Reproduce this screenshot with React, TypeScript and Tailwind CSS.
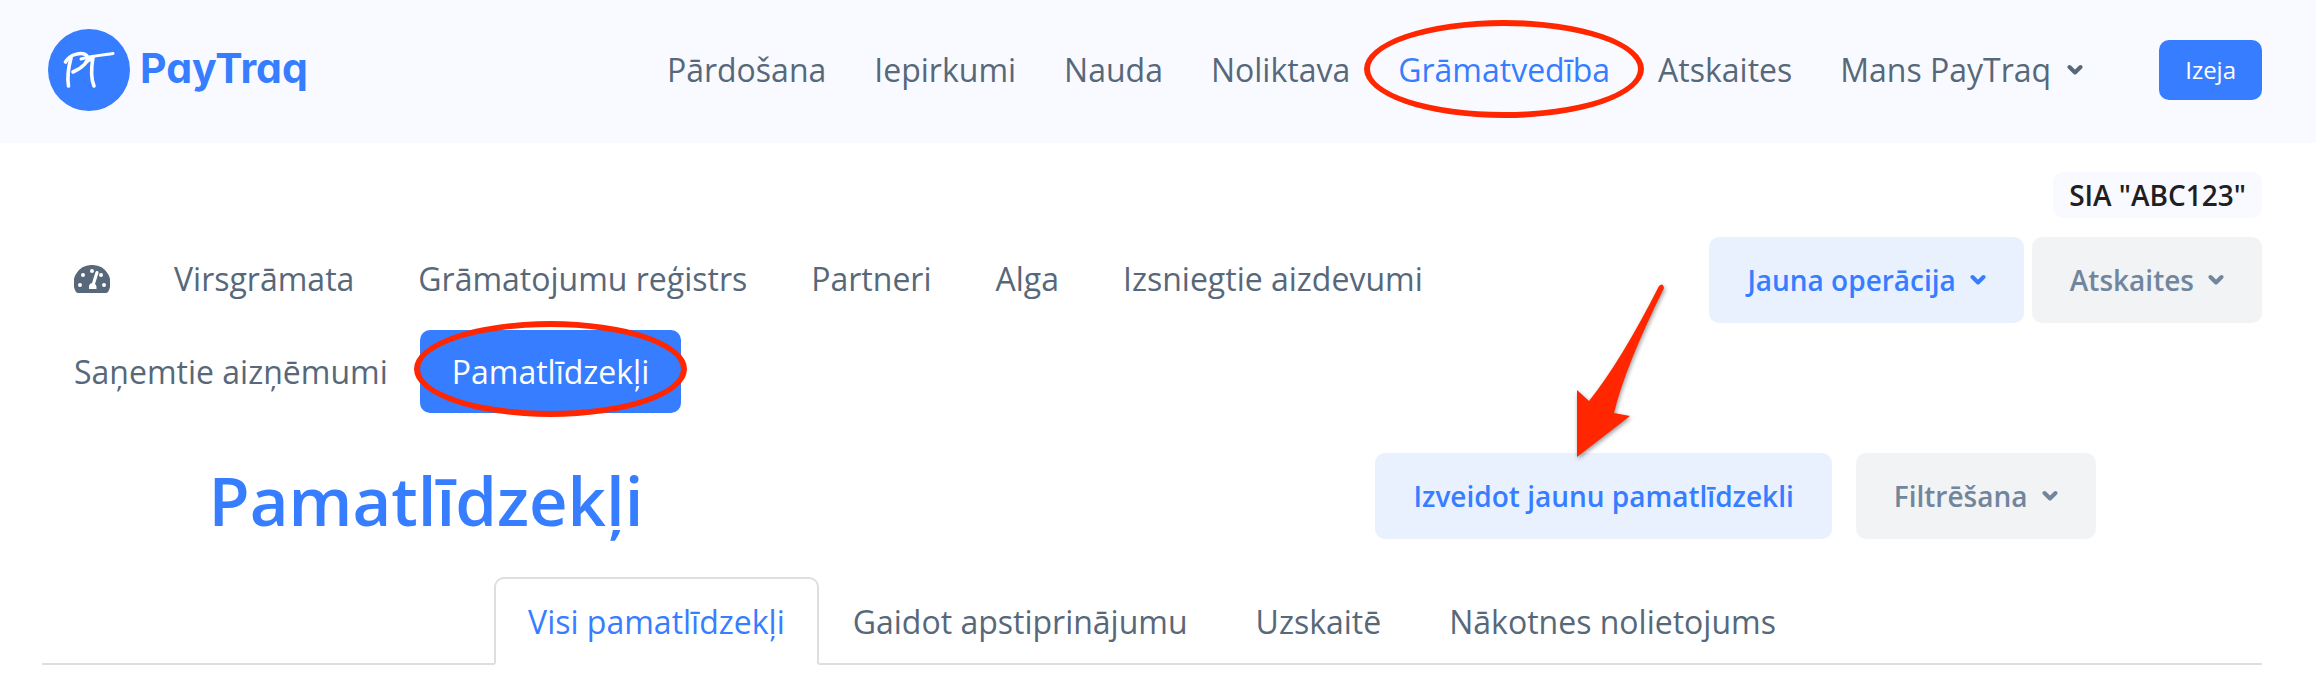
import React, { useState } from 'react';

const mainLinks = ['Pārdošana', 'Iepirkumi', 'Nauda', 'Noliktava', 'Grāmatvedība', 'Atskaites'];
const subLinks = [
  'Virsgrāmata',
  'Grāmatojumu reģistrs',
  'Partneri',
  'Alga',
  'Izsniegtie aizdevumi',
  'Saņemtie aizņēmumi',
  'Pamatlīdzekļi',
];
const tabs = ['Visi pamatlīdzekļi', 'Gaidot apstiprinājumu', 'Uzskaitē', 'Nākotnes nolietojums'];

const Chevron = () => (
  <svg viewBox="0 0 16 12" className="w-4 h-3 shrink-0" fill="none" aria-hidden="true">
    <path
      d="M2.5 3 8 8.5 13.5 3"
      stroke="currentColor"
      strokeWidth="4"
      strokeLinecap="round"
      strokeLinejoin="round"
    />
  </svg>
);

const Logo = () => (
  <a href="#" className="flex items-center gap-[10px] text-[#377dff]">
    <svg viewBox="0 0 82 82" className="size-[82px]" fill="none" aria-hidden="true">
      <circle cx="41" cy="41" r="41" fill="currentColor" />
      <g stroke="#fff" strokeWidth="3.6" strokeLinecap="round" strokeLinejoin="round">
        <path d="M23 29C20 40 19 48 20.500 57" />
        <path d="M17.500 33C22 25 35 22 39 27C42 32 34 39 25 43" />
        <path d="M33 30C42 27 54 26 65 24.500" strokeWidth="3" />
        <path d="M38 33Q42 31 45 28C43 40 43 50 46 57" />
      </g>
    </svg>
    <span className="font-['Inter',sans-serif] font-bold text-[41px] leading-[48px] [font-feature-settings:'cv11'] mb-1">
      PayTraq
    </span>
  </a>
);

const Gauge = () => (
  <svg viewBox="0 0 36 28" className="w-9 h-7" aria-hidden="true">
    <path fill="currentColor" d="M18 0A18 18 0 0 0 2 27Q3 28 4 28H32Q33 28 34 27A18 18 0 0 0 18 0Z" />
    <g fill="#fff">
      <circle cx="6" cy="20" r="2" />
      <circle cx="9" cy="10" r="2" />
      <circle cx="18" cy="6" r="2" />
      <circle cx="27" cy="10" r="2" />
      <circle cx="30" cy="20" r="2" />
      <path d="M15 24v-2a4 4 0 0 1 3-4L21.500 7a1.500 1.500 0 0 1 3 1L21 19a4 4 0 0 1 1.500 3v2z" />
    </g>
  </svg>
);

const Ellipse = ({ className }: { className: string }) => (
  <span
    aria-hidden="true"
    className={`absolute rounded-[50%] border-6 border-[#ff2600] pointer-events-none ${className}`}
  />
);

const Arrow = () => (
  <svg
    viewBox="0 0 96 184"
    className="absolute bottom-[76px] left-[198px] w-24 h-46 pointer-events-none drop-shadow-[1px_2px_2px_rgba(0,0,0,0.4)]"
    aria-hidden="true"
  >
    <path
      fill="#ff2600"
      d="M4 178V111L16 122Q48 82 86 7Q90 3 91 9Q52 88 41 134L57 137Z"
    />
  </svg>
);

const App = () => {
  const [tab, setTab] = useState(tabs[0]);

  return (
    <div className="font-['Open_Sans',sans-serif] text-[32px] leading-[48px] text-[#566879] bg-white">
      <header className="bg-[#f9faff] h-[143px] pl-12 pr-[54px] pb-1 flex items-center justify-between">
        <Logo />
        <nav className="flex items-center gap-12">
          {mainLinks.map(link =>
            link === 'Grāmatvedība' ? (
              <a key={link} href="#" className="relative text-[#377dff]">
                {link}
                <Ellipse className="-inset-x-[34px] -top-[26px] h-[98px]" />
              </a>
            ) : (
              <a key={link} href="#">
                {link}
              </a>
            )
          )}
          <button className="flex items-center gap-4">
            Mans PayTraq
            <Chevron />
          </button>
          <button className="ml-7 h-[60px] px-[26px] rounded-[10px] bg-[#377dff] text-white text-2xl">
            Izeja
          </button>
        </nav>
      </header>

      <main className="pl-[42px] pr-[54px] pt-[29px]">
        <div className="flex justify-end">
          <span className="rounded-[10px] bg-[#f9faff] px-4 text-[28px] leading-[46px] font-semibold text-[#1e2022]">
            SIA "ABC123"
          </span>
        </div>

        <div className="mt-[19px] flex items-start justify-between">
          <nav className="flex flex-1 flex-wrap gap-y-[10px]">
            <a href="#" aria-label="Panelis" className="h-[83px] px-8 flex items-center">
              <Gauge />
            </a>
            {subLinks.map(link =>
              link === 'Pamatlīdzekļi' ? (
                <a
                  key={link}
                  href="#"
                  className="relative h-[83px] px-8 flex items-center rounded-[10px] bg-[#377dff] text-white"
                >
                  {link}
                  <Ellipse className="-inset-x-[6px] -top-[9px] h-24" />
                </a>
              ) : (
                <a key={link} href="#" className="h-[83px] px-8 flex items-center">
                  {link}
                </a>
              )
            )}
          </nav>
          <div className="flex gap-2 text-[28px] font-semibold">
            <button className="h-[86px] px-[38px] flex items-center gap-[14px] rounded-[10px] bg-[#e9f1ff] text-[#377dff]">
              Jauna operācija
              <Chevron />
            </button>
            <button className="h-[86px] px-[38px] flex items-center gap-[14px] rounded-[10px] bg-[#f1f3f5] text-[#71869d]">
              Atskaites
              <Chevron />
            </button>
          </div>
        </div>

        <div className="mt-10 mx-auto w-[85%] flex items-start justify-between">
          <h1 className="pt-1 text-[67px] leading-[86px] font-semibold text-[#377dff]">Pamatlīdzekļi</h1>
          <div className="flex gap-6 text-[28px] font-semibold">
            <button className="relative h-[86px] px-[38px] rounded-[10px] bg-[#e9f1ff] text-[#377dff]">
              Izveidot jaunu pamatlīdzekli
              <Arrow />
            </button>
            <button className="h-[86px] px-[38px] flex items-center gap-[14px] rounded-[10px] bg-[#f1f3f5] text-[#71869d]">
              Filtrēšana
              <Chevron />
            </button>
          </div>
        </div>

        <div role="tablist" className="mt-[34px] flex justify-center border-b-2 border-[#dedede]">
          {tabs.map(t => (
            <button
              key={t}
              role="tab"
              aria-selected={t === tab}
              onClick={() => setTab(t)}
              className={`-mb-[2px] h-[88px] px-8 pt-[2px] rounded-t-[10px] border-2 ${
                t === tab
                  ? 'border-[#dedede] border-b-white bg-white text-[#377dff]'
                  : 'border-transparent'
              }`}
            >
              {t}
            </button>
          ))}
        </div>
      </main>
    </div>
  );
};

export default App;
